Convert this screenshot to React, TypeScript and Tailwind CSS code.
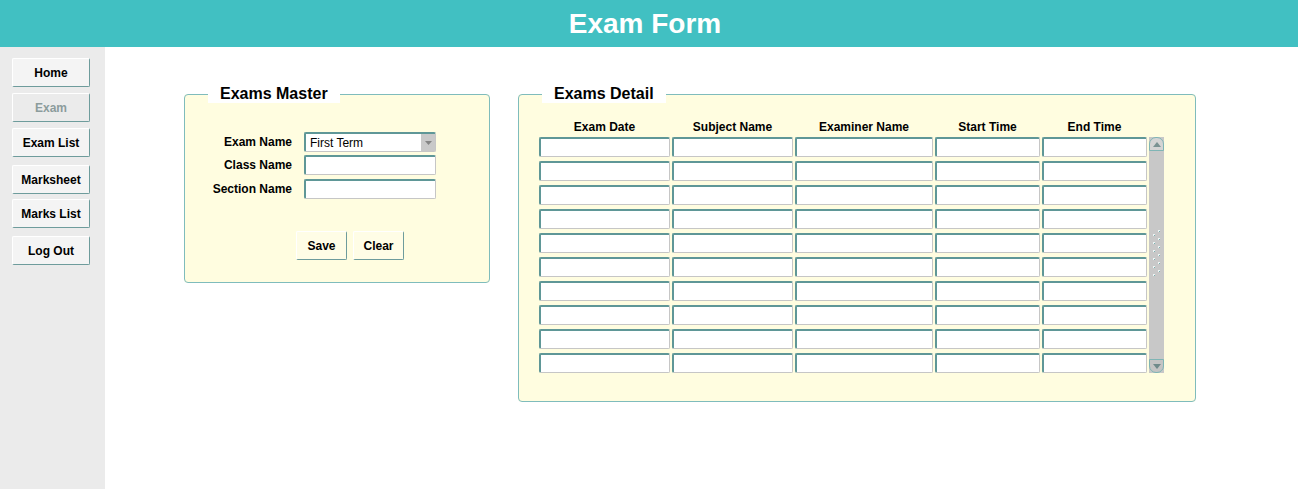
const font = { fontFamily: '"Liberation Sans", Arial, sans-serif' };

const navItems = [
  { label: "Home", mt: "mt-[11px]" },
  { label: "Exam", mt: "mt-[6px]", disabled: true },
  { label: "Exam List", mt: "mt-[6px]" },
  { label: "Marksheet", mt: "mt-[8px]" },
  { label: "Marks List", mt: "mt-[5px]" },
  { label: "Log Out", mt: "mt-[8px]" },
];

const columns = [
  { label: "Exam Date", w: "w-[131px]" },
  { label: "Subject Name", w: "w-[121px]" },
  { label: "Examiner Name", w: "w-[138px]" },
  { label: "Start Time", w: "w-[105px]" },
  { label: "End Time", w: "w-[105px]" },
];

const rows = Array.from({ length: 10 }, (_, i) => i);

const inputClass =
  "h-[20px] rounded-[2px] border-t-2 border-l-2 border-r border-b border-t-[#5f9797] border-l-[#5f9797] border-r-[#c6c6c6] border-b-[#c6c6c6] bg-white outline-none";

const SideButton = ({ label, mt, disabled }: { label: string; mt: string; disabled?: boolean }) => (
  <button
    className={`${mt} ml-[12px] flex h-[29px] w-[78px] items-center justify-center rounded-[2px] border border-t-white border-l-white border-r-[#6e9c9c] border-b-[#6e9c9c] text-[12px] font-bold ${
      disabled ? "bg-[#ebebeb] text-[#8c9c9c]" : "bg-[#f4f4f4] text-black"
    }`}
  >
    {label}
  </button>
);

const FormButton = ({ label }: { label: string }) => (
  <button className="flex h-[29px] w-[51px] items-center justify-center rounded-[2px] border border-t-white border-l-white border-r-[#6e9c9c] border-b-[#6e9c9c] bg-[#fffde6] text-[12px] font-bold text-black">
    {label}
  </button>
);

const Scrollbar = () => (
  <div className="ml-[2px] flex w-[15px] flex-col bg-[#c8c8c8]">
    <div className="flex h-[14px] items-center justify-center rounded-t-[7px] border border-[#7fb5b5] bg-[#d4d4d4]">
      <svg width="8" height="5" viewBox="0 0 8 5">
        <path d="M0 5 L4 0 L8 5 Z" fill="#7a9292" />
      </svg>
    </div>
    <div className="flex flex-1 items-center justify-center">
      <svg width="10" height="50" viewBox="0 0 10 50">
        {[0, 8, 16, 24, 32, 40].map((y) => (
          <g key={y}>
            <rect x="6" y={y} width="2" height="2" fill="#eef4f4" />
            <rect x="1" y={y + 4} width="2" height="2" fill="#eef4f4" />
            <rect x="7" y={y + 1} width="1" height="1" fill="#7ab0b0" />
            <rect x="2" y={y + 5} width="1" height="1" fill="#7ab0b0" />
          </g>
        ))}
      </svg>
    </div>
    <div className="flex h-[14px] items-center justify-center rounded-b-[7px] border border-[#7fb5b5] bg-[#c4c4c4]">
      <svg width="8" height="5" viewBox="0 0 8 5">
        <path d="M0 0 L8 0 L4 5 Z" fill="#6f8a8a" />
      </svg>
    </div>
  </div>
);

export default function App() {
  return (
    <div className="flex h-[489px] w-full flex-col bg-white" style={font}>
      {/* Header */}
      <header className="flex h-[47px] shrink-0 items-center justify-center bg-[#41c0c2] pr-[8px]">
        <h1 className="text-[28px] font-bold leading-none text-white">Exam Form</h1>
      </header>

      <div className="flex flex-1">
        {/* Sidebar */}
        <aside className="flex w-[105px] shrink-0 flex-col bg-[#ebebeb]">
          {navItems.map((item) => (
            <SideButton key={item.label} {...item} />
          ))}
        </aside>

        {/* Content */}
        <main className="flex items-start gap-[28px] pl-[79px] pt-[38px]">
          {/* Exams Master */}
          <fieldset className="h-[198px] w-[306px] rounded-[4px] border border-[#7fbcbc] bg-[#fffde0] p-0">
            <legend className="ml-[23px] bg-white px-[12px] text-[16px] font-bold leading-[18px] text-black">
              Exams Master
            </legend>
            <div className="grid grid-cols-[107px_132px] items-center gap-x-[12px] gap-y-[3px] pt-[29px] text-[12px]">
              <label className="text-right font-bold text-black">Exam Name</label>
              <div className={`${inputClass} flex items-center justify-between pl-[4px]`}>
                <span className="text-[12px] text-black">First Term</span>
                <span className="flex h-full w-[14px] items-center justify-center bg-[#c9c9c9]">
                  <svg width="7" height="4" viewBox="0 0 7 4">
                    <path d="M0 0 L7 0 L3.5 4 Z" fill="#858585" />
                  </svg>
                </span>
              </div>
              <label className="text-right font-bold text-black">Class Name</label>
              <input className={inputClass} />
              <label className="text-right font-bold text-black">Section Name</label>
              <input className={`${inputClass} mt-[1px]`} />
            </div>
            <div className="ml-[111px] mt-[32px] flex gap-[6px]">
              <FormButton label="Save" />
              <FormButton label="Clear" />
            </div>
          </fieldset>

          {/* Exams Detail */}
          <fieldset className="h-[317px] w-[678px] rounded-[4px] border border-[#7fbcbc] bg-[#fffde0] p-0">
            <legend className="ml-[23px] bg-white px-[12px] text-[16px] font-bold leading-[18px] text-black">
              Exams Detail
            </legend>
            <div className="pl-[20px] pt-[17px]">
              <div className="flex gap-[2px] pb-[3px]">
                {columns.map((c) => (
                  <div key={c.label} className={`${c.w} text-center text-[12px] font-bold leading-[14px] text-black`}>
                    {c.label}
                  </div>
                ))}
              </div>
              <div className="flex">
                <div className="flex flex-col gap-[4px]">
                  {rows.map((r) => (
                    <div key={r} className="flex gap-[2px]">
                      {columns.map((c) => (
                        <input key={c.label} className={`${inputClass} ${c.w}`} />
                      ))}
                    </div>
                  ))}
                </div>
                <Scrollbar />
              </div>
            </div>
          </fieldset>
        </main>
      </div>
    </div>
  );
}
